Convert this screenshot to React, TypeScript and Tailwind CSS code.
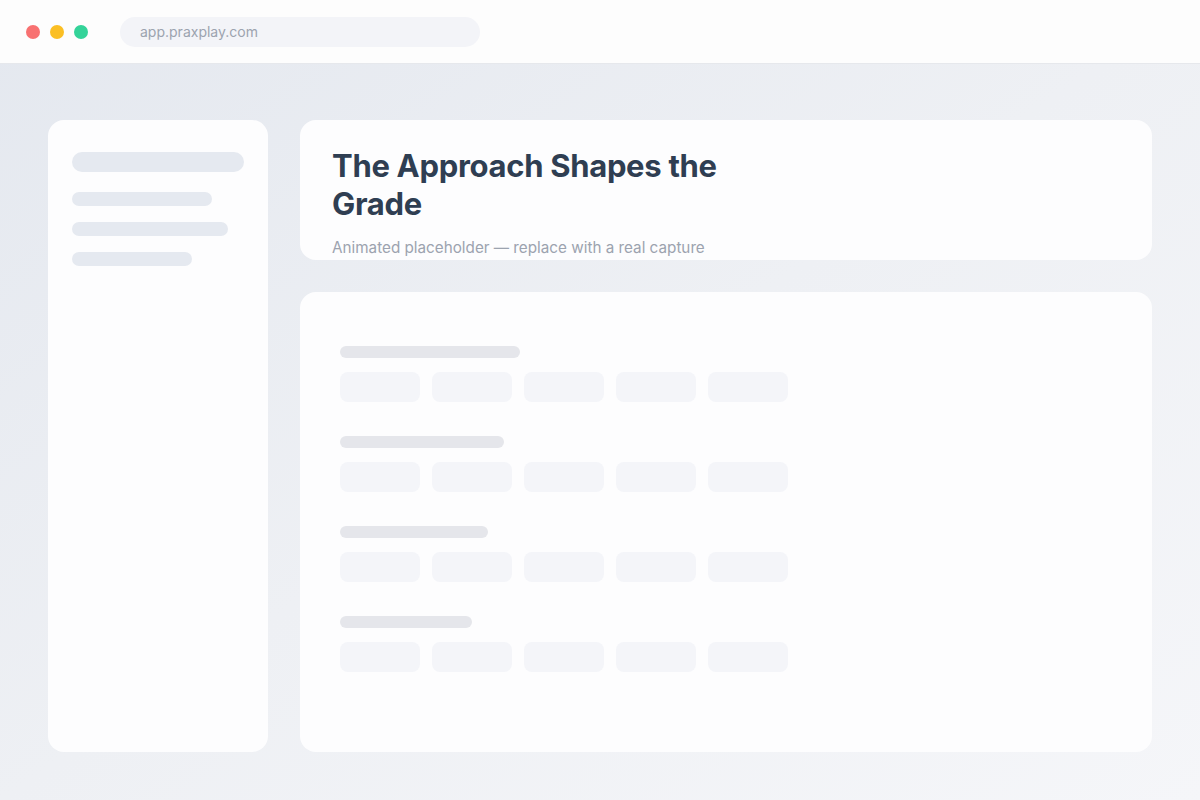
import React from "react";

const groups = [180, 164, 148, 132];

export default function App() {
  return (
    <div
      className="w-[1200px] h-[800px] flex flex-col bg-gradient-to-br from-[#e4e8ef] via-[#eef0f4] to-[#f5f6f9] overflow-hidden"
      style={{ fontFamily: "Inter, 'Noto Sans', sans-serif" }}
    >
      <div className="h-16 shrink-0 flex items-center bg-[#fdfdfd] border-b border-[#e6e8ec] pl-[26px]">
        <div className="flex items-center gap-[10px]">
          <span className="w-[14px] h-[14px] rounded-full bg-[#f87171]" />
          <span className="w-[14px] h-[14px] rounded-full bg-[#fbbf24]" />
          <span className="w-[14px] h-[14px] rounded-full bg-[#34d399]" />
        </div>
        <div className="ml-8 w-[360px] h-[30px] rounded-full bg-[#f3f4f8] flex items-center px-5 text-[14px] text-[#9ca3af]">
          app.praxplay.com
        </div>
      </div>
      <div className="flex-1 flex gap-8 px-12 pt-14 pb-12">
        <div className="w-[220px] shrink-0 rounded-2xl bg-[#fdfdfe] px-6 pt-8 flex flex-col">
          <div className="h-5 w-[172px] rounded-full bg-[#e5e9f0]" />
          <div className="mt-5 h-[14px] w-[140px] rounded-full bg-[#e5e9f0]" />
          <div className="mt-4 h-[14px] w-[156px] rounded-full bg-[#e5e9f0]" />
          <div className="mt-4 h-[14px] w-[120px] rounded-full bg-[#e5e9f0]" />
        </div>
        <div className="flex-1 flex flex-col gap-8">
          <div className="h-[140px] shrink-0 rounded-2xl bg-[#fdfdfe] px-8 pt-[27px] overflow-hidden">
            <h1 className="max-w-[420px] text-[31px] leading-[38px] font-bold text-[#2f3e52] tracking-[-0.3px]">
              The Approach Shapes the Grade
            </h1>
            <p className="mt-[14px] text-[15.25px] leading-[22px] text-[#9ca3af]">
              Animated placeholder — replace with a real capture
            </p>
          </div>
          <div className="flex-1 rounded-2xl bg-[#fdfdfe] px-10 pt-[54px] flex flex-col gap-[34px]">
            {groups.map((w, i) => (
              <div key={i} className="flex flex-col gap-[14px]">
                <div className="h-3 rounded-full bg-[#e5e6eb]" style={{ width: w }} />
                <div className="flex gap-3">
                  {[0, 1, 2, 3, 4].map((j) => (
                    <div key={j} className="w-20 h-[30px] rounded-lg bg-[#f4f5f9]" />
                  ))}
                </div>
              </div>
            ))}
          </div>
        </div>
      </div>
    </div>
  );
}
